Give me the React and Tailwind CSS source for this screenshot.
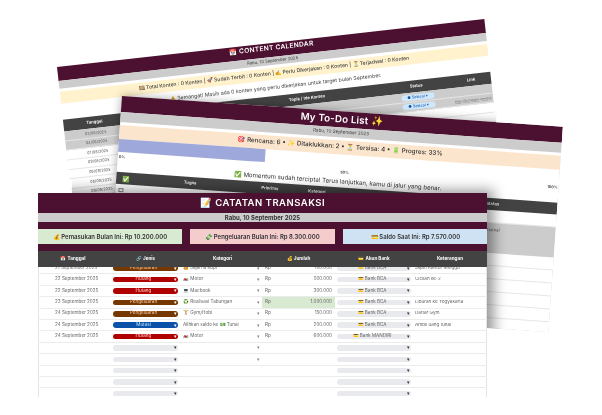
import React from "react";

const frontCols = "grid grid-cols-[70px_75px_79px_73px_78px_74px]";

const jenisStyle = {
  Hutang: "bg-[#b10202] text-[#ffcfc9]",
  Pengeluaran: "bg-[#753800] text-[#ffc8aa]",
  Mutasi: "bg-[#0a53a8] text-[#bfe1f6]",
};

const transaksi = [
  { tgl: "21 September 2025", jenis: "Pengeluaran", kat: "🍔 Jajan & Kopi", amt: "100.000", bank: "Bank BCA", note: "Jajan Kantor Minggu" },
  { tgl: "22 September 2025", jenis: "Hutang", kat: "🏍️ Motor", amt: "500.000", bank: "Bank BCA", note: "Cicilan ke-2" },
  { tgl: "22 September 2025", jenis: "Hutang", kat: "💻 Macbook", amt: "300.000", bank: "Bank BCA", note: "" },
  { tgl: "23 September 2025", jenis: "Pengeluaran", kat: "♻️ Realisasi Tabungan", amt: "1.000.000", bank: "Bank BCA", note: "Liburan ke Yogyakarta", hi: true },
  { tgl: "24 September 2025", jenis: "Pengeluaran", kat: "🏋️ Gym/Hobi", amt: "150.000", bank: "Bank BCA", note: "Daftar Gym" },
  { tgl: "24 September 2025", jenis: "Mutasi", kat: "Alihkan saldo ke 💵 Tunai", amt: "200.000", bank: "Bank BCA", note: "Ambil uang tunai" },
  { tgl: "24 September 2025", jenis: "Hutang", kat: "🏍️ Motor", amt: "600.000", bank: "Bank MANDIRI", note: "" },
  { chevron: true },
  { chevron: true },
  {},
  {},
  {},
];

function Caret({ className }) {
  return <span className={`ml-auto text-[5px] leading-none ${className || "text-[#333]"}`}>▾</span>;
}

function FrontRow({ r }) {
  return (
    <div className={`${frontCols} h-[11.4px] shrink-0 border-b border-[#ececec] text-[4.6px] leading-none text-[#666] items-center`}>
      <div className="pl-[17px]">{r.tgl}</div>
      <div className="px-[5px]">
        <div className={`flex items-center h-[5.5px] rounded-full pr-[1px] ${r.jenis ? jenisStyle[r.jenis] : "bg-[#e8eaed]"}`}>
          <span className="flex-1 text-center">{r.jenis}</span>
          <Caret className={r.jenis ? "text-white" : "text-[#333]"} />
        </div>
      </div>
      <div className="flex items-center pr-[2px] whitespace-nowrap">
        <span>{r.kat}</span>
        {(r.kat || r.chevron) && <Caret className="text-[#888]" />}
      </div>
      <div className={`flex h-full items-center justify-between pl-[3px] pr-[3px] ${r.hi ? "bg-[#d9ead3]" : ""}`}>
        {r.amt && <span>Rp</span>}
        <span>{r.amt}</span>
      </div>
      <div className="px-[2px]">
        <div className="flex items-center h-[5.5px] rounded-full bg-[#e8eaed] pr-[1px]">
          <span className="flex-1 text-center whitespace-nowrap">{r.bank && `💳 ${r.bank}`}</span>
          <Caret />
        </div>
      </div>
      <div className="pl-[2px] whitespace-nowrap overflow-hidden">{r.note}</div>
    </div>
  );
}

function BackSheet() {
  const rows = ["03/08/2025", "04/08/2025", "07/08/2025", "09/08/2025", "06/09/2025", "08/09/2025", "09/09/2025", "10/09/2025"];
  return (
    <div className="absolute left-[57px] top-[67px] w-[430px] h-[142px] origin-top-left rotate-[-6.4deg] bg-white flex flex-col">
      <div className="h-[14.5px] pb-[2px] bg-[#4c1130] text-white text-[6.6px] font-semibold tracking-[0.3px] flex items-center justify-center">
        📅 CONTENT CALENDAR
      </div>
      <div className="h-[9px] bg-[#cccccc] text-[4.2px] text-[#444] flex items-center justify-center">Rabu, 10 September 2025</div>
      <div className="h-[2.5px]" />
      <div className="h-[13.5px] bg-[#fff2cc] text-[5.1px] text-[#444] font-medium flex items-center justify-center whitespace-nowrap">
        🎞️ Total Konten : 0 Konten | 🚀 Sudah Terbit : 0 Konten | ✍️ Perlu Dikerjakan : 0 Konten | ⏳ Terjadwal : 0 Konten
      </div>
      <div className="h-[16.5px] text-[5.2px] text-[#444] flex items-center justify-center whitespace-nowrap">
        ⚠️ Semangat! Masih ada 0 konten yang perlu dikerjakan untuk target bulan September.
      </div>
      <div className="h-[13px] bg-[#434343] text-white text-[4.2px] font-semibold grid grid-cols-[62px_36px_72px_150px_70px_40px] items-center text-center">
        <span>Tanggal</span>
        <span>Waktu</span>
        <span>Platform</span>
        <span>Topik / Ide Konten</span>
        <span>Status</span>
        <span>Link</span>
      </div>
      {rows.map((d, i) => (
        <div
          key={d}
          className={`h-[9.6px] shrink-0 text-[3.8px] text-[#666] grid grid-cols-[62px_36px_72px_150px_70px_40px] items-center text-center border-b border-[#e6e6e6] ${i < 2 ? "bg-[#cccccc]" : ""}`}
        >
          <span>{d}</span>
          <span />
          <span />
          <span />
          <span className="flex justify-center">
            {i < 2 && (
              <span className="w-[33px] h-[6px] rounded-full bg-[#cfe8fb] text-[#0a53a8] text-[3.8px] flex items-center justify-center">● Selesai ▾</span>
            )}
          </span>
          <span className="text-[3px] underline whitespace-nowrap overflow-hidden">{i === 1 ? "https://instagram.com/p/x" : ""}</span>
        </div>
      ))}
    </div>
  );
}

function MiddleSheet() {
  const cols = "grid grid-cols-[18px_112px_48px_46px_144px_74px]";
  return (
    // shadow only falls on the sheet behind, clipped off over the white page
    <div className="absolute left-[122px] top-[96px] w-[442px] h-[206px] origin-top-left rotate-[4deg] bg-white shadow-[0_0_10px_rgba(0,0,0,0.35)] [clip-path:polygon(-20px_-20px,375px_-20px,375px_0,442px_0,442px_206px,-20px_206px)] flex flex-col">
      <div className="h-[16px] shrink-0 bg-[#4c1130] text-white text-[9.7px] font-semibold tracking-[0.2px] flex items-center justify-center">
        My To-Do List ✨
      </div>
      <div className="h-[10px] shrink-0 bg-[#cccccc] text-[4.6px] text-[#444] flex items-center justify-center">Rabu, 10 September 2025</div>
      <div className="h-[3px] shrink-0" />
      <div className="h-[14px] shrink-0 bg-[#fce5cd] text-[6.3px] text-[#333] font-medium flex items-center justify-center whitespace-nowrap">
        🎯 Rencana: 6 • ✨ Ditaklukkan: 2 • ⏳ Tersisa: 4 • 🔋 Progres: 33%
      </div>
      <div className="h-[13px] shrink-0 flex">
        <div className="w-[147px] bg-[#9fa8da]" />
      </div>
      <div className="h-[8px] shrink-0 pt-[1px] grid grid-cols-[222px_1fr_auto] items-center text-[3.8px] font-semibold text-[#333] px-[1px]">
        <span>0%</span>
        <span>50%</span>
        <span>100%</span>
      </div>
      <div className="h-[12px] shrink-0 text-[6.1px] text-[#333] flex items-center justify-center whitespace-nowrap">
        ✅ Momentum sudah tercipta! Terus lanjutkan, kamu di jalur yang benar.
      </div>
      <div className={`${cols} h-[12px] shrink-0 bg-[#434343] text-white text-[4.2px] font-semibold items-center text-center`}>
        <span className="text-[6px]">✅</span>
        <span>Tugas</span>
        <span>Prioritas</span>
        <span>Kategori</span>
        <span />
        <span className="text-left">Catatan</span>
      </div>
      <div className={`${cols} h-[13px] shrink-0 text-[4.4px] text-[#555] items-center border-b border-[#e6e6e6]`}>
        <span className="ml-[3px] w-[4.5px] h-[4.5px] border border-[#888]" />
        <span />
        <span />
        <span />
        <span />
        <span>3</span>
      </div>
      <div className={`${cols} h-[30px] shrink-0 bg-[#cccccc] text-[4.4px] text-[#555] pt-[4px]`}>
        <span />
        <span />
        <span />
        <span />
        <span />
        <span>Personal</span>
      </div>
      {[0, 1, 2, 3, 4, 5].map((i) => (
        <div key={i} className="h-[13px] shrink-0 border-b border-[#e6e6e6]" />
      ))}
    </div>
  );
}

function FrontSheet() {
  return (
    // clip keeps the shadow on the sheets behind, none on the white page
    <div className="absolute left-[38px] top-[193px] w-[449px] h-[204px] bg-white shadow-[7px_-3px_12px_rgba(0,0,0,0.4)] [clip-path:polygon(0_0,34px_0,34px_-30px,530px_-30px,511px_140px,449px_135px,449px_204px,0_204px)] flex flex-col overflow-hidden">
      <div className="h-[20px] shrink-0 bg-[#4c1130] text-white text-[9.5px] font-semibold tracking-[0.5px] flex items-center justify-center">
        📝 CATATAN TRANSAKSI
      </div>
      <div className="h-[9px] shrink-0 bg-[#cccccc] text-[6px] font-bold text-[#333] flex items-center justify-center">Rabu, 10 September 2025</div>
      <div className="h-[29px] shrink-0 bg-[#4c1130] grid grid-cols-[144px_145px_144px] justify-between pt-[7px] pb-[7px] text-[6px] font-semibold text-[#333] whitespace-nowrap">
        <div className="bg-[#d9ead3] flex items-center justify-center">💰 Pemasukan Bulan Ini: Rp 10.200.000</div>
        <div className="bg-[#f4cccc] flex items-center justify-center">💸 Pengeluaran Bulan Ini: Rp 8.300.000</div>
        <div className="bg-[#cfe2f3] flex items-center justify-center mr-[-1px]">💳 Saldo Saat Ini: Rp 7.570.000</div>
      </div>
      <div className={`${frontCols} h-[16px] shrink-0 relative z-10 bg-[#434343] text-white text-[4.6px] font-bold items-center text-center`}>
        <span>📅 Tanggal</span>
        <span>🔗 Jenis</span>
        <span>Kategori</span>
        <span>💰 Jumlah</span>
        <span>💳 Akun Bank</span>
        <span>Keterangan</span>
      </div>
      <div className="-mt-[4px] flex-1 flex flex-col shadow-[inset_1px_0_0_#e4e4e4,inset_-1px_0_0_#e4e4e4]">
        {transaksi.map((r, i) => (
          <FrontRow key={i} r={r} />
        ))}
      </div>
    </div>
  );
}

export default function App() {
  return (
    <div className="relative w-[602px] h-[415px] overflow-hidden bg-white font-['Inter','Noto_Sans',sans-serif] blur-[0.4px]">
      <BackSheet />
      <MiddleSheet />
      <FrontSheet />
    </div>
  );
}
